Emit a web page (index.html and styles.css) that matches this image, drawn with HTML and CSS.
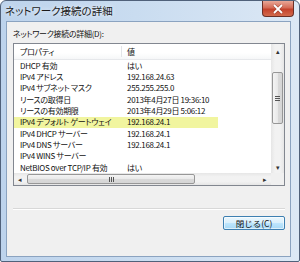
FILE: index.html
```html
<!DOCTYPE html>
<html lang="ja">
  <head>
    <meta charset="UTF-8" />
    <title>ネットワーク接続の詳細</title>
    <link rel="stylesheet" href="styles.css">
  </head>
  <body>
    <div class="window">
      <div class="titlebar">
        <span class="title">ネットワーク接続の詳細</span>
        <div class="close-btn">
          <svg width="12" height="10" viewBox="0 0 12 10">
            <path d="M2 1 L10 9 M10 1 L2 9" stroke="#6b2418" stroke-width="3" opacity="0.5" />
            <path d="M2 1 L10 9 M10 1 L2 9" stroke="#fff" stroke-width="1.8" />
          </svg>
        </div>
      </div>

      <div class="client">
        <div class="group-label">ネットワーク接続の詳細(D):</div>

        <div class="listview">
          <div class="list-body">
            <div class="list-header">
              <span class="col-prop">プロパティ</span>
              <span class="col-val">値</span>
            </div>
            <div class="row"><span class="col-prop">DHCP 有効</span><span class="col-val">はい</span></div>
            <div class="row"><span class="col-prop">IPv4 アドレス</span><span class="col-val">192.168.24.63</span></div>
            <div class="row"><span class="col-prop">IPv4 サブネット マスク</span><span class="col-val">255.255.255.0</span></div>
            <div class="row"><span class="col-prop">リースの取得日</span><span class="col-val">2013年4月27日 19:36:10</span></div>
            <div class="row"><span class="col-prop">リースの有効期限</span><span class="col-val">2013年4月29日 5:06:12</span></div>
            <div class="row marked"><span class="col-prop">IPv4 デフォルト ゲートウェイ</span><span class="col-val">192.168.24.1</span></div>
            <div class="row"><span class="col-prop">IPv4 DHCP サーバー</span><span class="col-val">192.168.24.1</span></div>
            <div class="row"><span class="col-prop">IPv4 DNS サーバー</span><span class="col-val">192.168.24.1</span></div>
            <div class="row"><span class="col-prop">IPv4 WINS サーバー</span><span class="col-val"></span></div>
            <div class="row"><span class="col-prop">NetBIOS over TCP/IP 有効</span><span class="col-val">はい</span></div>
          </div>

          <div class="vscroll">
            <div class="arrow">&#9652;</div>
            <div class="track">
              <div class="thumb"><span class="grip-v"></span></div>
            </div>
            <div class="arrow">&#9662;</div>
          </div>

          <div class="hscroll">
            <div class="arrow">&#9666;</div>
            <div class="track">
              <div class="thumb"><span class="grip-h"></span></div>
            </div>
            <div class="arrow">&#9656;</div>
          </div>

          <div class="corner"></div>
        </div>

        <div class="separator"></div>

        <div class="button-row">
          <button class="close-dialog">閉じる(C)</button>
        </div>
      </div>
    </div>
  </body>
</html>
```

FILE: styles.css
```css
body {
  margin: 0;
  padding: 0;
  font-family: "Noto Sans CJK JP", "Noto Sans", sans-serif;
  font-feature-settings: "palt";
  background: #ffffff;
}

.window {
  width: 300px;
  height: 262px;
  box-sizing: border-box;
  border: 1px solid #50617a;
  border-radius: 6px 6px 2px 2px;
  background: linear-gradient(90deg, #bdd3ec 0%, #c9dcf0 45%, #dce8f5 100%);
  display: flex;
  flex-direction: column;
  overflow: hidden;
}

.titlebar {
  height: 20px;
  display: flex;
  justify-content: space-between;
  align-items: flex-start;
  padding-left: 4px;
  flex-shrink: 0;
}

.title {
  font-size: 10.5px;
  line-height: 19px;
  color: #1a1a1a;
  text-shadow: 0 0 4px rgba(255, 255, 255, 0.9);
}

.close-btn {
  width: 32px;
  height: 16px;
  margin-right: 5px;
  box-sizing: border-box;
  border: 1px solid #6a2f26;
  border-top: none;
  border-radius: 0 0 4px 4px;
  background: linear-gradient(180deg, #e9a797 0%, #d46b56 45%, #c4422c 55%, #d26a4c 100%);
  display: flex;
  justify-content: center;
  align-items: center;
}

.client {
  flex: 1;
  margin: 0 8px 4px 5px;
  background: #f0f0f0;
  border: 1px solid #8ba3c0;
  display: flex;
  flex-direction: column;
  padding: 0 5px 0 6px;
  font-size: 8px;
  letter-spacing: -0.3px;
  color: #111;
}

.group-label {
  line-height: 12px;
  padding-top: 6px;
  margin-bottom: 3px;
}

.listview {
  height: 143px;
  box-sizing: border-box;
  border: 1px solid #828790;
  background: #fff;
  display: grid;
  grid-template-columns: 1fr 13px;
  grid-template-rows: 1fr 12px;
}

.list-body {
  overflow: hidden;
  grid-column: 1;
  grid-row: 1;
}

.list-header {
  height: 16px;
  display: flex;
  align-items: center;
  background: linear-gradient(180deg, #ffffff 0%, #ffffff 60%, #f6f7f8 100%);
  border-bottom: 1px solid #e6e8eb;
  box-sizing: border-box;
}

.list-header .col-prop {
  border-right: 1px solid #e3e5e8;
}

.row {
  height: 11.33px;
  display: flex;
  align-items: center;
  line-height: 10px;
}

.row.marked {
  background: linear-gradient(90deg, #f1f59f 204px, transparent 204px);
}

.col-prop {
  width: 108px;
  padding-left: 6px;
  box-sizing: border-box;
  white-space: nowrap;
  overflow: hidden;
  flex-shrink: 0;
}

.col-val {
  padding-left: 5px;
  white-space: nowrap;
}

.vscroll,
.hscroll {
  background: linear-gradient(90deg, #e6e6e6, #f2f2f2 30%, #f2f2f2 70%, #e6e6e6);
  display: flex;
  color: #333;
  font-size: 7px;
  letter-spacing: 0;
}

.vscroll {
  grid-column: 2;
  grid-row: 1;
  flex-direction: column;
}

.hscroll {
  grid-column: 1;
  grid-row: 2;
  background: linear-gradient(180deg, #e6e6e6, #f2f2f2 30%, #f2f2f2 70%, #e6e6e6);
}

.arrow {
  width: 13px;
  height: 13px;
  display: flex;
  justify-content: center;
  align-items: center;
  flex-shrink: 0;
}

.hscroll .arrow {
  width: 12px;
  height: 12px;
}

.track {
  flex: 1;
  display: flex;
}

.vscroll .track {
  flex-direction: column;
  padding-top: 15px;
}

.hscroll .track {
  padding-left: 1px;
}

.thumb {
  box-sizing: border-box;
  border: 1px solid #979797;
  border-radius: 2px;
  display: flex;
  justify-content: center;
  align-items: center;
}

.vscroll .thumb {
  height: 52px;
  margin: 0 1px;
  background: linear-gradient(90deg, #f4f4f4 0%, #e9e9e9 50%, #d9d9d9 51%, #d6d6d6 100%);
}

.hscroll .thumb {
  width: 168px;
  margin: 1px 0;
  background: linear-gradient(180deg, #f4f4f4 0%, #e9e9e9 50%, #d9d9d9 51%, #d6d6d6 100%);
}

.grip-v {
  width: 5px;
  height: 5px;
  background: repeating-linear-gradient(180deg, #555 0, #555 1px, transparent 1px, transparent 2px);
}

.grip-h {
  width: 5px;
  height: 5px;
  background: repeating-linear-gradient(90deg, #555 0, #555 1px, transparent 1px, transparent 2px);
}

.corner {
  grid-column: 2;
  grid-row: 2;
  background: #f0f0f0;
}

.separator {
  margin-top: 22px;
  height: 1px;
  border-bottom: 1px solid #ffffff;
  background: #d8d8d8;
}

.button-row {
  display: flex;
  justify-content: flex-end;
  padding-top: 6px;
}

.close-dialog {
  width: 62px;
  height: 14px;
  padding: 0;
  border: 1px solid #3c7fb1;
  border-radius: 2px;
  background: linear-gradient(180deg, #eaf6fd 0%, #d9f0fc 50%, #bee6fd 51%, #a7d9f5 100%);
  box-shadow: inset 0 0 0 1px rgba(255, 255, 255, 0.6);
  font-family: "Noto Sans CJK JP", "Noto Sans", sans-serif;
  font-size: 8.5px;
  line-height: 12px;
  color: #111;
}
```
